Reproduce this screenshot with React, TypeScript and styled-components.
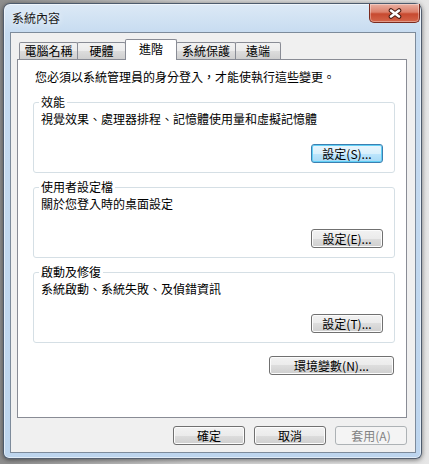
import React from "react";
import styled, { createGlobalStyle } from "styled-components";

const Global = createGlobalStyle`
  html, body { margin: 0; padding: 0; }
  body {
    background: #c8c8c8;
    font-family: "Noto Sans CJK TC", "Noto Sans", sans-serif;
    font-size: 12px;
    color: #000;
  }
`;

const Backdrop = styled.div`
  width: 429px;
  height: 464px;
  box-sizing: border-box;
  padding: 3px 0 0 3px;
  overflow: hidden;
  background: linear-gradient(to right, #8e8e8e, #cfcfcf 45%, #e6e6e6);
`;

const Window = styled.div`
  box-sizing: border-box;
  width: 419px;
  height: 456px;
  border: 1px solid rgba(40, 50, 65, 0.75);
  border-radius: 7px 7px 6px 6px;
  background: linear-gradient(180deg, #dce9f6 0%, #c6dbf0 30px, #bdd5ee 100%);
  box-shadow: inset 0 0 0 1px rgba(255, 255, 255, 0.55), 0 1px 5px rgba(0, 0, 0, 0.5);
  display: flex;
  flex-direction: column;
`;

const TitleBar = styled.div`
  height: 28px;
  flex-shrink: 0;
  display: flex;
  align-items: flex-start;
  justify-content: space-between;
`;

const Title = styled.div`
  margin: 7px 0 0 8px;
  line-height: 14px;
  color: #1a1a1a;
  text-shadow: 0 0 6px rgba(255, 255, 255, 0.9);
`;

const CloseButton = styled.div`
  width: 51px;
  height: 19px;
  margin-right: 1px;
  box-sizing: border-box;
  border: 1px solid #7a2a1e;
  border-top: none;
  border-radius: 0 0 5px 5px;
  background: linear-gradient(180deg, #eab0a2 0%, #dc806b 45%, #c74a30 55%, #d4654a 100%);
  box-shadow: inset 0 0 0 1px rgba(255, 255, 255, 0.35);
  display: flex;
  align-items: center;
  justify-content: center;
`;

const Client = styled.div`
  box-sizing: border-box;
  width: 406px;
  height: 421px;
  margin-left: 6px;
  border: 1px solid #7d8b9b;
  background: #f0f0f0;
  padding: 6px 8px 7px 6px;
  display: flex;
  flex-direction: column;
`;

const TabStrip = styled.div`
  display: flex;
  align-items: flex-end;
  height: 20px;
  padding-left: 2px;
  flex-shrink: 0;
`;

const Tab = styled.div<{ $w: number; $active?: boolean }>`
  box-sizing: border-box;
  position: relative;
  z-index: ${(p) => (p.$active ? 2 : 1)};
  width: ${(p) => p.$w}px;
  height: ${(p) => (p.$active ? 21 : 17)}px;
  margin-bottom: ${(p) => (p.$active ? -1 : 0)}px;
  margin-left: -1px;
  &:first-child { margin-left: 0; }
  border: 1px solid #898c95;
  border-bottom: none;
  border-radius: 2px 2px 0 0;
  background: ${(p) =>
    p.$active
      ? "#ffffff"
      : "linear-gradient(180deg, #f2f2f2 0%, #ebebeb 50%, #dddddd 50%, #cfcfcf 100%)"};
  display: flex;
  align-items: center;
  justify-content: center;
  padding-bottom: ${(p) => (p.$active ? 2 : 0)}px;
  line-height: 14px;
  white-space: nowrap;
`;

const Panel = styled.div`
  box-sizing: border-box;
  width: 390px;
  height: 359px;
  flex-shrink: 0;
  border: 1px solid #898c95;
  background: #ffffff;
  padding: 10px 11px 0 15px;
  display: flex;
  flex-direction: column;
`;

const Intro = styled.div`
  margin: 0 0 4px 2px;
  line-height: 14px;
  white-space: nowrap;
`;

const Group = styled.fieldset`
  box-sizing: border-box;
  margin: 7px 0 0 0;
  border: 1px solid #d5dfe5;
  border-radius: 3px;
  padding: 0 11px 9px 7px;
  min-width: 0;
`;

const Legend = styled.legend`
  padding: 0 2px;
  margin-left: -2px;
  line-height: 14px;
`;

const Desc = styled.div`
  margin-top: 3px;
  line-height: 14px;
  white-space: nowrap;
`;

const ButtonRow = styled.div<{ $top: number }>`
  display: flex;
  justify-content: flex-end;
  gap: 9px;
  margin-top: ${(p) => p.$top}px;
`;

const Button = styled.button<{ $w?: number; $variant?: "default" | "disabled" }>`
  box-sizing: border-box;
  width: ${(p) => p.$w ?? 72}px;
  height: 19px;
  padding: 0;
  margin: 0;
  font-family: inherit;
  font-size: 12px;
  line-height: 14px;
  border-radius: 3px;
  white-space: nowrap;
  border: 1px solid
    ${(p) => (p.$variant === "default" ? "#3c7fb1" : p.$variant === "disabled" ? "#adb2b5" : "#707070")};
  color: ${(p) => (p.$variant === "disabled" ? "#838383" : "#000")};
  background: ${(p) =>
    p.$variant === "default"
      ? "linear-gradient(180deg, #eaf6fd 0%, #d9f0fc 50%, #bee6fd 50%, #a7d9f5 100%)"
      : p.$variant === "disabled"
      ? "#f4f4f4"
      : "linear-gradient(180deg, #f2f2f2 0%, #ebebeb 50%, #dddddd 50%, #cfcfcf 100%)"};
  box-shadow: ${(p) =>
    p.$variant === "default"
      ? "inset 0 0 0 1px #62d0f6"
      : p.$variant === "disabled"
      ? "none"
      : "inset 0 0 0 1px #fcfcfc"};
`;

const EnvRow = styled.div`
  display: flex;
  justify-content: flex-end;
  margin: 13px 1px 0 0;
`;

const Footer = styled.div`
  display: flex;
  justify-content: flex-end;
  gap: 9px;
  margin-top: 8px;
`;

const CloseIcon = () => (
  <svg width="14" height="11" viewBox="0 0 14 11">
    <path d="M3 2.5 L11 8.5 M11 2.5 L3 8.5" stroke="#4a1b12" strokeWidth="4.6" strokeLinecap="round" />
    <path d="M3 2.5 L11 8.5 M11 2.5 L3 8.5" stroke="#ffffff" strokeWidth="2.6" strokeLinecap="round" />
  </svg>
);

const tabs = [
  { label: "電腦名稱", w: 59 },
  { label: "硬體", w: 49 },
  { label: "進階", w: 52, active: true },
  { label: "系統保護", w: 60 },
  { label: "遠端", w: 46 },
];

const groups = [
  { title: "效能", desc: "視覺效果、處理器排程、記憶體使用量和虛擬記憶體", btn: "設定(S)...", def: true },
  { title: "使用者設定檔", desc: "關於您登入時的桌面設定", btn: "設定(E)..." },
  { title: "啟動及修復", desc: "系統啟動、系統失敗、及偵錯資訊", btn: "設定(T)..." },
];

export default function App() {
  return (
    <>
      <Global />
      <Backdrop>
        <Window>
          <TitleBar>
            <Title>系統內容</Title>
            <CloseButton>
              <CloseIcon />
            </CloseButton>
          </TitleBar>
          <Client>
            <TabStrip>
              {tabs.map((t) => (
                <Tab key={t.label} $w={t.w} $active={t.active}>
                  {t.label}
                </Tab>
              ))}
            </TabStrip>
            <Panel>
              <Intro>您必須以系統管理員的身分登入，才能使執行這些變更。</Intro>
              {groups.map((g) => (
                <Group key={g.title}>
                  <Legend>{g.title}</Legend>
                  <Desc>{g.desc}</Desc>
                  <ButtonRow $top={18}>
                    <Button $variant={g.def ? "default" : undefined}>{g.btn}</Button>
                  </ButtonRow>
                </Group>
              ))}
              <EnvRow>
                <Button $w={125}>環境變數(N)...</Button>
              </EnvRow>
            </Panel>
            <Footer>
              <Button>確定</Button>
              <Button>取消</Button>
              <Button $variant="disabled">套用(A)</Button>
            </Footer>
          </Client>
        </Window>
      </Backdrop>
    </>
  );
}
